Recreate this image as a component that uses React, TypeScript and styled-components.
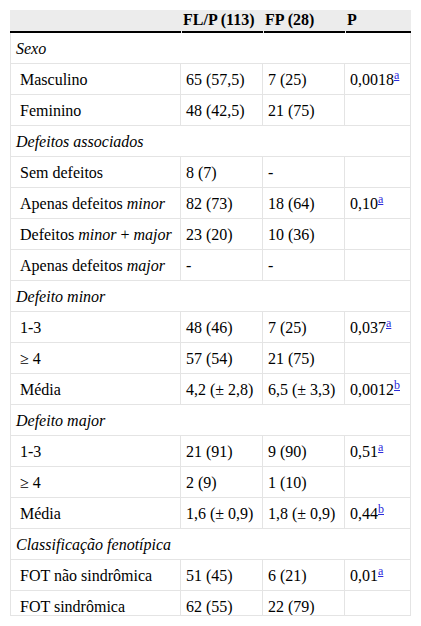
import React from "react";
import styled, { createGlobalStyle } from "styled-components";

const Global = createGlobalStyle`
  html, body { margin: 0; padding: 0; background: #fff; }
  body { font-family: "Liberation Serif", "Times New Roman", serif; color: #000; }
`;

const Frame = styled.div`
  margin: 10px 0 0 10px;
  width: 401px;
  height: 605px;
  overflow: hidden;
  border-bottom: 1px solid #e4e4e4;
`;

const Table = styled.table`
  width: 401px;
  table-layout: fixed;
  border-collapse: separate;
  border-spacing: 0;
  font-family: "Liberation Serif", "Times New Roman", serif;
  font-size: 16px;
  line-height: 18px;
`;

const Th = styled.th<{ $first?: boolean }>`
  height: 20px;
  padding: 0 1px 1px 2px;
  text-align: left;
  vertical-align: middle;
  font-weight: bold;
  white-space: nowrap;
  border-bottom: 2px solid transparent;
  background:
    linear-gradient(#000, #000) no-repeat right bottom / ${(p) => (p.$first ? "100%" : "calc(100% - 1px)")} 2px border-box,
    #ececec;
`;

const Td = styled.td<{ $first?: boolean; $indent?: boolean; $section?: boolean }>`
  height: 29px;
  padding: 1px 4px 0 ${(p) => (p.$indent ? "9px" : "5px")};
  vertical-align: middle;
  white-space: nowrap;
  border-right: 1px solid #e4e4e4;
  border-bottom: 1px solid #e4e4e4;
  border-left: ${(p) => (p.$first ? "1px solid #e4e4e4" : "0")};
  font-style: ${(p) => (p.$section ? "italic" : "normal")};
`;

const Sup = styled.sup`
  font-size: 12px;
  line-height: 0;
  vertical-align: 6px;
`;

const Ref = styled.a`
  color: #2b2bdb;
  text-decoration: underline;
`;

type Row =
  | { kind: "section"; label: string }
  | { kind: "data"; label: React.ReactNode; a: string; b: string; p?: string; ref?: string };

const rows: Row[] = [
  { kind: "section", label: "Sexo" },
  { kind: "data", label: "Masculino", a: "65 (57,5)", b: "7 (25)", p: "0,0018", ref: "a" },
  { kind: "data", label: "Feminino", a: "48 (42,5)", b: "21 (75)" },
  { kind: "section", label: "Defeitos associados" },
  { kind: "data", label: "Sem defeitos", a: "8 (7)", b: "-" },
  { kind: "data", label: <>Apenas defeitos <i>minor</i></>, a: "82 (73)", b: "18 (64)", p: "0,10", ref: "a" },
  { kind: "data", label: <>Defeitos <i>minor</i> + <i>major</i></>, a: "23 (20)", b: "10 (36)" },
  { kind: "data", label: <>Apenas defeitos <i>major</i></>, a: "-", b: "-" },
  { kind: "section", label: "Defeito minor" },
  { kind: "data", label: "1-3", a: "48 (46)", b: "7 (25)", p: "0,037", ref: "a" },
  { kind: "data", label: "≥ 4", a: "57 (54)", b: "21 (75)" },
  { kind: "data", label: "Média", a: "4,2 (± 2,8)", b: "6,5 (± 3,3)", p: "0,0012", ref: "b" },
  { kind: "section", label: "Defeito major" },
  { kind: "data", label: "1-3", a: "21 (91)", b: "9 (90)", p: "0,51", ref: "a" },
  { kind: "data", label: "≥ 4", a: "2 (9)", b: "1 (10)" },
  { kind: "data", label: "Média", a: "1,6 (± 0,9)", b: "1,8 (± 0,9)", p: "0,44", ref: "b" },
  { kind: "section", label: "Classificação fenotípica" },
  { kind: "data", label: "FOT não sindrômica", a: "51 (45)", b: "6 (21)", p: "0,01", ref: "a" },
  { kind: "data", label: "FOT sindrômica", a: "62 (55)", b: "22 (79)" },
];

export default function App() {
  return (
    <>
      <Global />
      <Frame>
        <Table>
          <colgroup>
            <col style={{ width: 171 }} />
            <col style={{ width: 82 }} />
            <col style={{ width: 82 }} />
            <col style={{ width: 66 }} />
          </colgroup>
          <thead>
            <tr>
              <Th $first></Th>
              <Th>FL/P (113)</Th>
              <Th>FP (28)</Th>
              <Th>P</Th>
            </tr>
          </thead>
          <tbody>
            {rows.map((r, i) =>
              r.kind === "section" ? (
                <tr key={i}>
                  <Td $first $section colSpan={4}>
                    {r.label}
                  </Td>
                </tr>
              ) : (
                <tr key={i}>
                  <Td $first $indent>
                    {r.label}
                  </Td>
                  <Td>{r.a}</Td>
                  <Td>{r.b}</Td>
                  <Td>
                    {r.p}
                    {r.ref && (
                      <Sup>
                        <Ref href="#">{r.ref}</Ref>
                      </Sup>
                    )}
                  </Td>
                </tr>
              )
            )}
          </tbody>
        </Table>
      </Frame>
    </>
  );
}
